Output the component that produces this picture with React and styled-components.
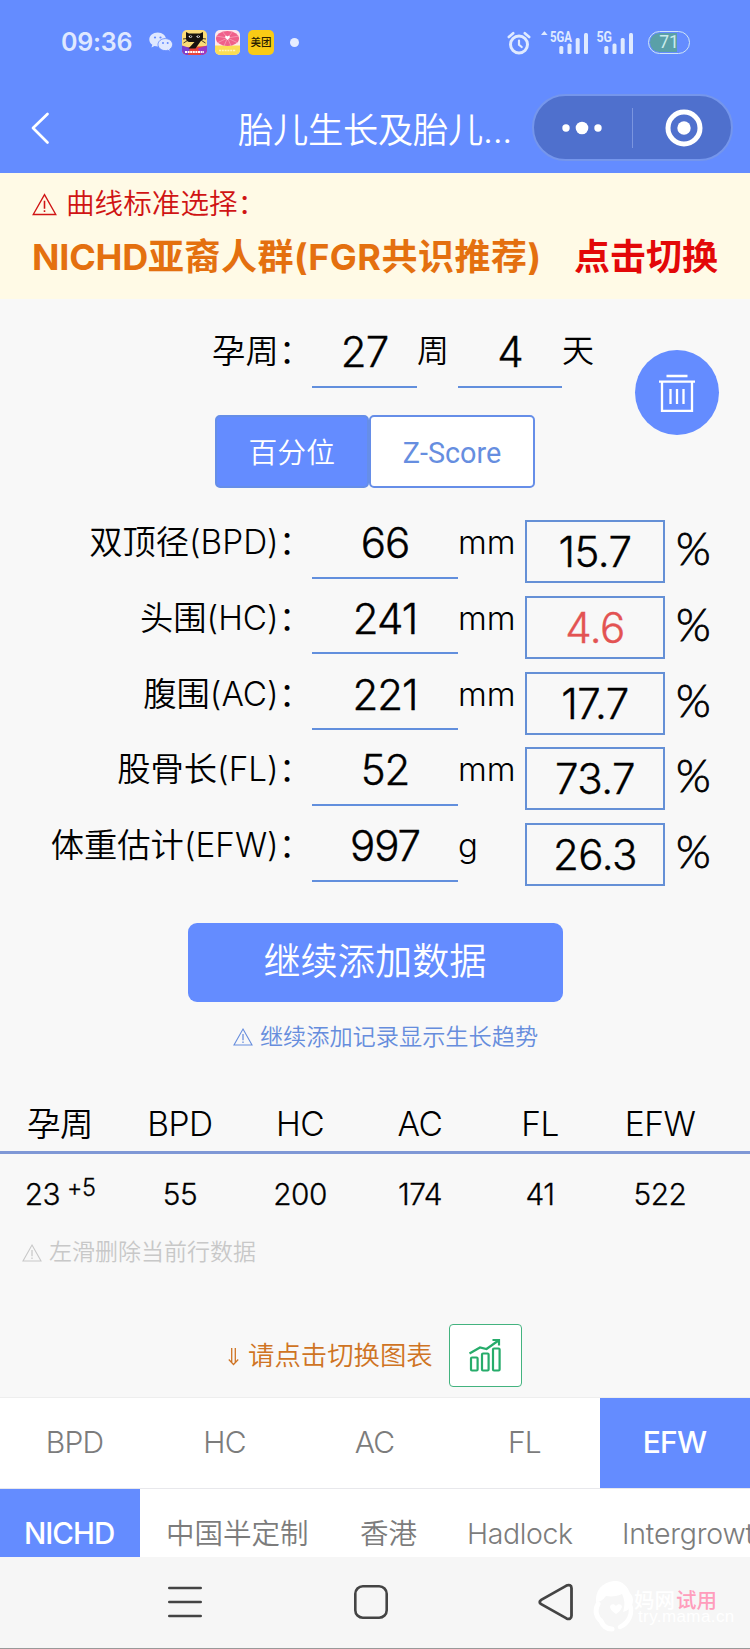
import React from 'react'
import styled, { createGlobalStyle } from 'styled-components'

const MEASURES = [
    { label: '双顶径(BPD)', value: '66', unit: 'mm', result: '15.7' },
    { label: '头围(HC)', value: '241', unit: 'mm', result: '4.6', low: true },
    { label: '腹围(AC)', value: '221', unit: 'mm', result: '17.7' },
    { label: '股骨长(FL)', value: '52', unit: 'mm', result: '73.7' },
    { label: '体重估计(EFW)', value: '997', unit: 'g', result: '26.3' },
]

const COLUMNS = ['孕周', 'BPD', 'HC', 'AC', 'FL', 'EFW']
const CHART_TABS = ['BPD', 'HC', 'AC', 'FL', 'EFW']

const WarnIcon = ({ size }) => (
    <svg width={size} height={size} viewBox="0 0 24 24" fill="none" stroke="currentColor" strokeWidth="1.3">
        <path d="M12 2.5 22.8 21.6H1.2Z" />
        <path d="M12 8.5v7.5M12 17.4v1.8" strokeWidth="1.5" />
    </svg>
)

const WechatIcon = () => (
    <svg width="24" height="21" viewBox="0 0 24 21">
        <path d="M8.7.5C4 .5.3 3.6.3 7.5c0 2.1 1.1 4 3 5.3l-.8 2.7 3-1.6c1 .3 2 .5 3.2.5 4.7 0 8.3-3.1 8.3-6.9S13.4.5 8.7.5Z" fill="#dfe8ff" />
        <path d="M16.3 6.6c-4 0-7.3 2.6-7.3 6s3.3 6 7.3 6c.9 0 1.7-.1 2.5-.4l2.6 1.4-.7-2.3c1.8-1.1 2.9-2.8 2.9-4.7 0-3.4-3.3-6-7.3-6Z" fill="#dfe8ff" stroke="#648cff" strokeWidth=".9" />
        <g fill="#648cff">
            <circle cx="6" cy="5.5" r="1.1" />
            <circle cx="11.5" cy="5.5" r="1.1" />
            <circle cx="14" cy="11" r="1" />
            <circle cx="18.7" cy="11" r="1" />
        </g>
    </svg>
)

const CatAppIcon = () => (
    <svg width="25" height="25" viewBox="0 0 25 25">
        <defs>
            <clipPath id="cat"><rect width="25" height="25" rx="5" /></clipPath>
        </defs>
        <g clipPath="url(#cat)">
            <rect width="25" height="25" fill="#fbdc78" />
            <path d="M0 17.5 25 16v9H0Z" fill="#e8453c" />
            <path d="M0 15.5l8 2.5-2 7H0Z" fill="#7a3fd0" />
            <path d="M16 18.5 25 15.5V25H19Z" fill="#9a38c8" />
            <path d="M4 2 7 3.5h11L21 2v6.5c0 1.2-.8 2-2 2.3L13.5 18.5H6.5l6-6.5H7C5.2 11.5 4 10.5 4 8.5Z" fill="#17120f" />
            <path d="M6.5 6.5q2-2 4 0-2 2.5-4 0ZM14.2 6.5q2-2 4 0-2 2.5-4 0Z" fill="#fff" />
            <circle cx="8.7" cy="6.5" r=".8" fill="#17120f" />
            <circle cx="16.4" cy="6.5" r=".8" fill="#17120f" />
            <path d="M1 9l4-.5M1.5 13l4-2.5M24 9l-4-.5M23.5 13l-4-2.5" stroke="#17120f" strokeWidth=".8" />
            <path d="M3 22h19" stroke="#fff" strokeWidth="2.2" strokeDasharray="2 .6" />
        </g>
    </svg>
)

const PinkAppIcon = () => (
    <svg width="25" height="25" viewBox="0 0 25 25">
        <defs>
            <clipPath id="pink"><rect width="25" height="25" rx="5" /></clipPath>
        </defs>
        <g clipPath="url(#pink)">
            <rect width="25" height="25" fill="#fde9ec" />
            <path d="M0 15.5h25V25H0Z" fill="#fbdd55" />
            <ellipse cx="12.5" cy="8.5" rx="11.5" ry="7.5" fill="#f0608a" />
            <path d="M12.5 8 1 6M12.5 8 7 1M12.5 8 18 1M12.5 8 24 6M12.5 8 2 13M12.5 8 9 16M12.5 8 16 16M12.5 8 23 13" stroke="#f9b3c6" strokeWidth=".6" />
            <path d="M12.5 10 10.2 7.4c-.6-1.5 1.5-2.3 2.3-1 .8-1.3 2.9-.5 2.3 1Z" fill="#fff" />
            <path d="M4 20.5h17" stroke="#fff3b8" strokeWidth="1.6" strokeDasharray="2 .8" />
        </g>
    </svg>
)

const AlarmIcon = () => (
    <svg width="24" height="24" viewBox="0 0 24 24" fill="none" stroke="#dfeaff" strokeLinecap="round">
        <circle cx="12" cy="13.5" r="8.5" strokeWidth="3" />
        <path d="M12 9.5v4.3l2.7 2.2" strokeWidth="2.2" />
        <path d="M1.8 6 6.2 2.2M22.2 6l-4.4-3.8" strokeWidth="2.6" />
    </svg>
)

const SignalIcon = ({ label, arrow }) => (
    <svg width={arrow ? 48 : 38} height="28" viewBox={arrow ? '0 -1 48 28' : '10 -1 38 28'} fill="#dfeaff" overflow="visible">
        {arrow && <path d="M0 5 3.3 1l3.3 4Z" />}
        <text x={arrow ? 9 : 10.5} y="11.5" fontFamily="Roboto, sans-serif" fontWeight="700" fontSize="14.5" textLength={arrow ? 22 : 15.5} lengthAdjust="spacingAndGlyphs">{label}</text>
        <rect x="18.3" y="16" width="4" height="8" rx="1.5" />
        <rect x="26.5" y="13.5" width="4" height="10.5" rx="1.5" />
        <rect x="34.7" y="8" width="4" height="16" rx="1.5" />
        <rect x="43" y="3" width="4" height="21" rx="1.5" />
    </svg>
)

const TrashIcon = () => (
    <svg width="38" height="40" viewBox="0 0 38 40" fill="none" stroke="#fff" strokeWidth="2.3">
        <path d="M8.5 3h21M1 8.6h36M4 9v28.8h30V9" />
        <path d="M12.5 16v15M19 16v15M25.5 16v15" />
    </svg>
)

const ChartIcon = () => (
    <svg width="34" height="36" viewBox="0 0 34 36" fill="none" stroke="#27ac6b" strokeWidth="2.2">
        <rect x="3" y="20.5" width="6.6" height="13" rx="1" />
        <rect x="14" y="16.5" width="6.6" height="17" rx="1" />
        <rect x="25" y="11.5" width="6.6" height="22" rx="1" />
        <path d="M1.5 16.5 12 10.5l6.5 1.5L30.5 3.5M24.5 3h6.5v5.5" />
    </svg>
)

const DownArrow = () => (
    <svg width="11" height="18" viewBox="0 0 11 18" fill="none" stroke="currentColor" strokeWidth="1.3">
        <path d="M3.7 0v14M7.3 0v14M.8 11.5l4.7 5 4.7-5" />
    </svg>
)

const WatermarkFace = () => (
    <svg width="44" height="56" viewBox="0 0 44 56" fill="none" stroke="#fff" strokeLinecap="round">
        <path d="M21 3C9 4 2 13 3 24c4 0 7-2 10-6 6 1 12 0 16-2 3 6 3 12 1 18 3-1 5-2 7-4 4-4 4-11 0-15C35 9 29 2 21 3Z" fill="#fff" stroke="none" />
        <path d="M5 26c-4 7-1 14 3 17 2 5 6 8 11 8" strokeWidth="5" />
        <path d="M37 27c3 8-1 18-10 22" strokeWidth="4.5" />
        <path d="M23 36c-4-3-6-5-6-7 0-3 4-4 6-1 2-3 6-2 6 1-1 3-3 5-6 7Z" fill="#fff" stroke="none" />
    </svg>
)

const App = () => {
    return (
        <Page>
            <GlobalStyle />
            <Header>
                <StatusBar>
                    <Clock>09:36</Clock>
                    <AppIcons>
                        <WechatIcon />
                        <CatAppIcon />
                        <PinkAppIcon />
                        <MeituanIcon>美团</MeituanIcon>
                    </AppIcons>
                    <MoreDot />
                    <StatusRight>
                        <AlarmIcon />
                        <SignalIcon label="5GA" arrow />
                        <SignalIcon label="5G" />
                        <Battery><span>71</span></Battery>
                    </StatusRight>
                </StatusBar>
                <NavBar>
                    <svg width="20" height="34" viewBox="0 0 20 34" fill="none" stroke="#fff" strokeWidth="2.7" strokeLinecap="round" strokeLinejoin="round">
                        <path d="M17.5 3 3 17l14.5 14.5" />
                    </svg>
                    <Title>胎儿生长及胎儿...</Title>
                    <Capsule>
                        <svg width="40" height="14" viewBox="0 0 40 14" fill="#fff">
                            <circle cx="4" cy="7" r="3.7" />
                            <circle cx="20" cy="7" r="6.3" />
                            <circle cx="36" cy="7" r="3.7" />
                        </svg>
                        <CapsuleLine />
                        <svg width="38" height="38" viewBox="0 0 38 38">
                            <circle cx="19" cy="19" r="16" fill="none" stroke="#fff" strokeWidth="5" />
                            <circle cx="19" cy="19" r="6.7" fill="#fff" />
                        </svg>
                    </Capsule>
                </NavBar>
            </Header>

            <Banner>
                <BannerHint><WarnIcon size={25} /><span>曲线标准选择：</span></BannerHint>
                <BannerMain>
                    <Standard><b>NICHD</b>亚裔人群(FGR共识推荐)</Standard>
                    <Switch>点击切换</Switch>
                </BannerMain>
            </Banner>

            <Form>
                <WeekRow>
                    <Label>孕周：</Label>
                    <Value $width={105}>27</Value>
                    <WeekUnit>周</WeekUnit>
                    <Value $width={104}>4</Value>
                    <WeekUnit>天</WeekUnit>
                </WeekRow>
                <TrashButton><TrashIcon /></TrashButton>
                <Segments>
                    <Segment $width={154.5} $active>百分位</Segment>
                    <Segment $width={166}>Z-Score</Segment>
                </Segments>
                {MEASURES.map((m) => (
                    <Row key={m.label}>
                        <Label>{m.label}：</Label>
                        <Value $width={146}>{m.value}</Value>
                        <Unit>{m.unit}</Unit>
                        <Result $low={m.low}>{m.result}</Result>
                        <Percent>%</Percent>
                    </Row>
                ))}
                <AddButton>继续添加数据</AddButton>
                <Notice><WarnIcon size={20} />继续添加记录显示生长趋势</Notice>
            </Form>

            <TableHead>
                {COLUMNS.map((c) => <span key={c}>{c}</span>)}
            </TableHead>
            <TableRow>
                <span>23<Days>+5</Days></span>
                <span>55</span>
                <span>200</span>
                <span>174</span>
                <span>41</span>
                <span>522</span>
            </TableRow>
            <DeleteHint><WarnIcon size={20} />左滑删除当前行数据</DeleteHint>

            <ChartSwitch>
                <ArrowBox><DownArrow /></ArrowBox>
                <SwitchText>请点击切换图表</SwitchText>
                <ChartButton><ChartIcon /></ChartButton>
            </ChartSwitch>

            <ChartTabs>
                {CHART_TABS.map((t) => <ChartTab key={t} $active={t === 'EFW'}>{t}</ChartTab>)}
            </ChartTabs>
            <StandardTabs>
                <StandardTab $width={140} $active $size={29.5} $spacing={-1}>NICHD</StandardTab>
                <StandardTab $width={194}>中国半定制</StandardTab>
                <StandardTab $width={107}>香港</StandardTab>
                <StandardTab $width={155} $spacing={-0.4}>Hadlock</StandardTab>
                <StandardTab $width={206} $spacing={-0.2}>Intergrowth</StandardTab>
            </StandardTabs>

            <SystemBar>
                <svg width="34" height="32" viewBox="0 0 34 32" stroke="#444" strokeWidth="2.6" strokeLinecap="round">
                    <path d="M1.3 2h31.4M1.3 16h31.4M1.3 30h31.4" />
                </svg>
                <svg width="34" height="34" viewBox="0 0 34 34" fill="none" stroke="#444" strokeWidth="2.6">
                    <rect x="1.3" y="1.3" width="31.4" height="31.4" rx="7.5" />
                </svg>
                <svg width="36" height="38" viewBox="0 0 36 38" fill="none" stroke="#444" strokeWidth="2.8" strokeLinejoin="round">
                    <path d="M3.2 16.9 28.5 2.6c2.5-1.3 5-.2 5 2.6v27.6c0 2.8-2.5 3.9-5 2.6L3.2 21.1c-2-1.1-2-3.1 0-4.2Z" />
                </svg>
                <Watermark>
                    <WatermarkFace />
                    <div>
                        <WatermarkName>妈网<b>试用</b></WatermarkName>
                        <WatermarkUrl>try.mama.cn</WatermarkUrl>
                    </div>
                </Watermark>
            </SystemBar>
        </Page>
    )
}

export default App

const GlobalStyle = createGlobalStyle`
    *{
        box-sizing: border-box;
    }
    body{
        margin: 0;
        background: #f8f8f8;
    }
    svg{
        display: block;
        flex: none;
    }
`

const Page = styled.div`
    width: 750px;
    height: 1649px;
    overflow: hidden;
    background: #f8f8f8;
    color: #000;
    font-family: Inter, 'Noto Sans CJK SC', sans-serif;
    font-weight: 350;
    white-space: nowrap;
`

const Header = styled.header`
    height: 173px;
    background: #648cff;
    color: #fff;
`

const StatusBar = styled.div`
    display: flex;
    align-items: center;
    height: 85px;
    padding: 0 60px 0 61px;
`

const Clock = styled.div`
    width: 88px;
    padding-bottom: 2px;
    font-size: 25px;
    font-weight: 600;
    letter-spacing: -0.2px;
    line-height: 30px;
    color: #dfe8ff;
`

const AppIcons = styled.div`
    display: flex;
    align-items: center;
    gap: 8px;
    svg:first-child{
        margin-right: 1px;
    }
`

const MeituanIcon = styled.div`
    width: 26px;
    height: 25px;
    border-radius: 5px;
    background: #f9cb15;
    color: #2a2000;
    font-size: 10.5px;
    font-weight: 500;
    line-height: 25px;
    text-align: center;
`

const MoreDot = styled.div`
    width: 9px;
    height: 9px;
    margin-left: 16px;
    border-radius: 50%;
    background: #e6edff;
`

const StatusRight = styled.div`
    display: flex;
    align-items: center;
    margin-left: auto;
    svg:first-child{
        margin-right: 10px;
    }
    svg + svg + svg{
        margin-left: 7px;
    }
`

const Battery = styled.div`
    width: 42px;
    height: 23px;
    margin-left: 14px;
    padding: 1px;
    border: 1.5px solid #cfe6f5;
    border-radius: 12px;
    background: linear-gradient(90deg, #5aa0a8 70%, transparent 70%) content-box;
    overflow: hidden;
    span{
        display: block;
        font-family: Roboto, sans-serif;
        font-size: 17.5px;
        font-weight: 400;
        line-height: 19px;
        text-align: center;
        color: #c9ecec;
    }
`

const NavBar = styled.div`
    display: flex;
    align-items: center;
    height: 85px;
    padding: 0 17px 0 30px;
`

const Title = styled.h1`
    width: 293px;
    margin: 0 0 0 188px;
    font-size: 35.3px;
    font-weight: 350;
    letter-spacing: -0.3px;
`

const Capsule = styled.div`
    display: flex;
    align-items: center;
    width: 201px;
    height: 67px;
    margin-left: 1px;
    padding: 0 28px 0 28px;
    border: 2px solid #7596ec;
    border-radius: 34px;
    background: #4f70cd;
`

const CapsuleLine = styled.div`
    width: 1px;
    height: 40px;
    margin: 0 32px 0 30px;
    background: #7b95df;
`

const Banner = styled.section`
    height: 126px;
    padding: 11px 32px 0;
    background: #fffae6;
`

const BannerHint = styled.div`
    display: flex;
    align-items: center;
    gap: 9px;
    height: 40px;
    color: #d01414;
    font-size: 28.6px;
    line-height: 40px;
`

const BannerMain = styled.div`
    display: flex;
    justify-content: space-between;
    height: 50px;
    margin-top: 7px;
    font-size: 36px;
    font-weight: 700;
    line-height: 52px;
`

const Standard = styled.span`
    color: #e4700f;
    letter-spacing: 0.5px;
    b{
        font-weight: 700;
        letter-spacing: -0.2px;
    }
`

const Switch = styled.span`
    color: #e30808;
`

const Form = styled.section`
    position: relative;
`

const Row = styled.div`
    display: flex;
    height: 75.8px;
`

const WeekRow = styled(Row)`
    height: 89px;
    padding-top: 13px;
`

const Label = styled.div`
    width: 312px;
    font-size: 33.3px;
    line-height: 78px;
    text-align: right;
`

const Value = styled.div`
    width: ${(p) => p.$width}px;
    height: 75.5px;
    padding-top: 3px;
    border-bottom: 2px solid #628fdd;
    font-size: 42px;
    letter-spacing: -1px;
    line-height: 74px;
    text-align: center;
    -webkit-text-stroke: 0.4px currentColor;
`

const WeekUnit = styled.div`
    width: 41px;
    font-size: 32px;
    line-height: 78px;
`

const Unit = styled.div`
    width: 67px;
    font-size: 33px;
    line-height: 78px;
`

const Result = styled.div`
    width: 140px;
    height: 63px;
    margin-top: 17px;
    border: 2px solid #6590d6;
    color: ${(p) => (p.$low ? '#e35353' : '#000')};
    font-size: 42px;
    letter-spacing: -0.5px;
    line-height: 60px;
    text-align: center;
    -webkit-text-stroke: 0.4px currentColor;
`

const Percent = styled.div`
    padding: 7px 0 0 11px;
    font-family: Lato, sans-serif;
    font-size: 44.5px;
    font-weight: 300;
    line-height: 76px;
    -webkit-text-stroke: 0.8px currentColor;
`

const TrashButton = styled.div`
    position: absolute;
    top: 51px;
    right: 31px;
    display: flex;
    align-items: center;
    justify-content: center;
    width: 84px;
    height: 85px;
    border-radius: 50%;
    background: #648cff;
`

const Segments = styled.div`
    display: flex;
    margin: 27px 0 15px 214.5px;
`

const Segment = styled.div`
    width: ${(p) => p.$width}px;
    height: 73px;
    border: 2px solid #668ee8;
    border-radius: 5px;
    background: ${(p) => (p.$active ? '#648cff' : '#fff')};
    color: ${(p) => (p.$active ? '#fff' : '#668ee0')};
    font-family: Roboto, 'Noto Sans CJK SC', sans-serif;
    font-size: 28.8px;
    font-weight: ${(p) => (p.$active ? 350 : 400)};
    line-height: 73px;
    text-align: center;
`

const AddButton = styled.div`
    width: 375px;
    height: 79px;
    margin: 41px auto 0;
    border-radius: 9px;
    background: #648cff;
    color: #fff;
    font-size: 37.2px;
    line-height: 78px;
    text-align: center;
`

const Notice = styled.div`
    display: flex;
    align-items: center;
    justify-content: center;
    gap: 7px;
    height: 34px;
    margin-top: 18px;
    padding-left: 21px;
    color: #668ddd;
    font-size: 23.2px;
    line-height: 34px;
`

const TableHead = styled.div`
    display: grid;
    grid-template-columns: repeat(6, 120px);
    height: 57px;
    margin-top: 43px;
    border-bottom: 3px solid #7f98d6;
    font-size: 33.5px;
    line-height: 54px;
    text-align: center;
    letter-spacing: -0.5px;
`

const TableRow = styled.div`
    display: grid;
    grid-template-columns: repeat(6, 120px);
    height: 80px;
    font-size: 29.8px;
    letter-spacing: -0.5px;
    line-height: 80px;
    text-align: center;
    -webkit-text-stroke: 0.3px currentColor;
`

const Days = styled.sup`
    margin-left: 7px;
    font-size: 23.5px;
    line-height: 0;
    vertical-align: 9px;
`

const DeleteHint = styled.div`
    display: flex;
    align-items: center;
    gap: 7px;
    height: 36px;
    padding: 2px 0 0 22px;
    color: #c8c8c8;
    font-size: 23px;
    line-height: 37px;
`

const ChartSwitch = styled.div`
    display: flex;
    align-items: center;
    height: 63px;
    margin-top: 54px;
    padding-left: 228px;
    color: #cf7424;
`

const ArrowBox = styled.div`
    padding-top: 4px;
`

const SwitchText = styled.span`
    margin: 0 16px 0 9px;
    padding-bottom: 4px;
    font-size: 26.4px;
`

const ChartButton = styled.div`
    display: flex;
    align-items: center;
    justify-content: center;
    width: 73px;
    height: 63px;
    border: 1.5px solid #43b37f;
    border-radius: 4px;
    background: #fff;
`

const ChartTabs = styled.div`
    display: flex;
    height: 92px;
    margin-top: 10px;
    border-top: 1px solid #eee;
    border-bottom: 1px solid #e8e8ec;
    background: #fff;
`

const ChartTab = styled.div`
    flex: 1;
    padding-right: 1px;
    background: ${(p) => (p.$active ? '#648cff' : 'transparent')};
    color: ${(p) => (p.$active ? '#fff' : '#7c7c7c')};
    font-size: 30px;
    font-weight: ${(p) => (p.$active ? 500 : 350)};
    letter-spacing: -0.8px;
    line-height: 88px;
    text-align: center;
`

const StandardTabs = styled.div`
    display: flex;
    height: 68px;
    background: #fff;
    overflow: hidden;
`

const StandardTab = styled.div`
    flex: none;
    width: ${(p) => p.$width}px;
    padding-left: ${(p) => (p.$active ? 24 : 26)}px;
    background: ${(p) => (p.$active ? '#648cff' : 'transparent')};
    color: ${(p) => (p.$active ? '#fff' : '#7c7c7c')};
    font-size: ${(p) => p.$size || 28.5}px;
    font-weight: ${(p) => (p.$active ? 500 : 350)};
    letter-spacing: ${(p) => p.$spacing || 0}px;
    line-height: 89px;
`

const SystemBar = styled.div`
    display: flex;
    align-items: center;
    height: 92px;
    padding-left: 168px;
    border-bottom: 1px solid #999;
    background: #f6f6f6;
    svg:nth-child(2){
        margin-left: 152px;
    }
    svg:nth-child(3){
        margin-left: 150px;
    }
`

const Watermark = styled.div`
    display: flex;
    align-items: center;
    margin: 7px 0 0 19px;
    color: #fff;
    font-family: 'Noto Sans CJK SC', sans-serif;
`

const WatermarkName = styled.div`
    margin-left: -3px;
    font-size: 20.5px;
    font-weight: 500;
    line-height: 22px;
    b{
        margin-left: 1px;
        color: #ff9dbc;
        font-weight: 500;
    }
`

const WatermarkUrl = styled.div`
    margin-left: 1px;
    font-family: 'Liberation Sans', sans-serif;
    font-size: 17px;
    letter-spacing: 0.4px;
    line-height: 14px;
`
